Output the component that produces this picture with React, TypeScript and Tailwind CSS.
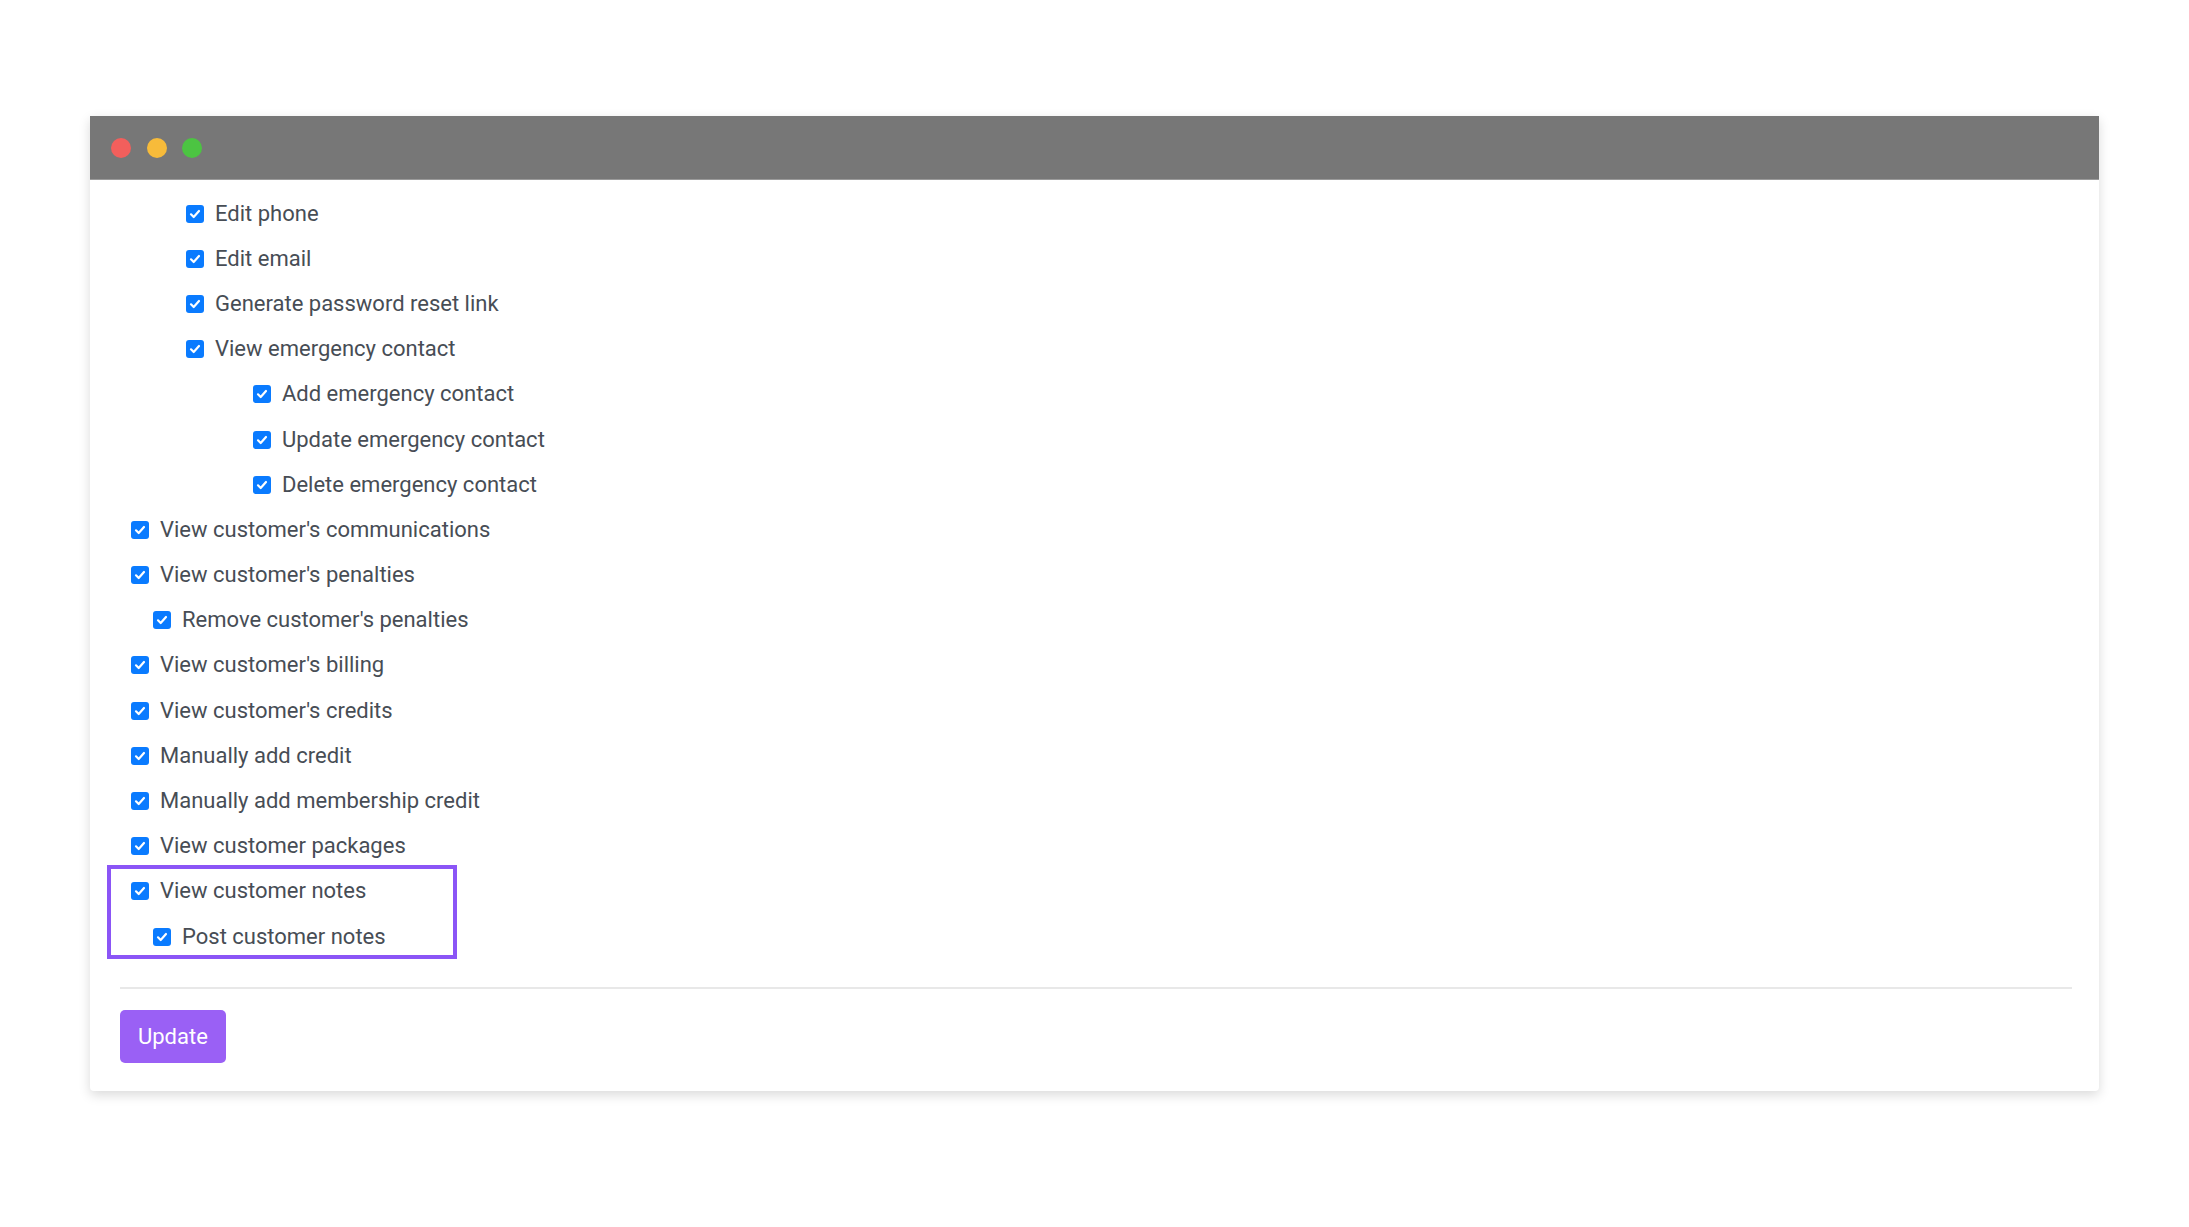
type Perm = { label: string; indent: string };

const before: Perm[] = [
  { label: "Edit phone", indent: "ml-[66px]" },
  { label: "Edit email", indent: "ml-[66px]" },
  { label: "Generate password reset link", indent: "ml-[66px]" },
  { label: "View emergency contact", indent: "ml-[66px]" },
  { label: "Add emergency contact", indent: "ml-[133px]" },
  { label: "Update emergency contact", indent: "ml-[133px]" },
  { label: "Delete emergency contact", indent: "ml-[133px]" },
  { label: "View customer's communications", indent: "ml-[11px]" },
  { label: "View customer's penalties", indent: "ml-[11px]" },
  { label: "Remove customer's penalties", indent: "ml-[33px]" },
  { label: "View customer's billing", indent: "ml-[11px]" },
  { label: "View customer's credits", indent: "ml-[11px]" },
  { label: "Manually add credit", indent: "ml-[11px]" },
  { label: "Manually add membership credit", indent: "ml-[11px]" },
  { label: "View customer packages", indent: "ml-[11px]" },
];

const notes: Perm[] = [
  { label: "View customer notes", indent: "ml-[11px]" },
  { label: "Post customer notes", indent: "ml-[33px]" },
];

function Checkbox() {
  return (
    <span className="flex h-[18px] w-[18px] shrink-0 items-center justify-center rounded-[3px] bg-[#0a7bff]">
      <svg width="12" height="12" viewBox="0 0 12 12" fill="none">
        <path d="M2 6.3 L4.7 9 L10 3" stroke="white" strokeWidth="2.2" strokeLinecap="round" strokeLinejoin="round" />
      </svg>
    </span>
  );
}

function Row({ p }: { p: Perm }) {
  return (
    <div className={`flex h-[45.2px] items-center gap-[11px] ${p.indent}`}>
      <Checkbox />
      <span className="text-[22px] leading-none text-[#474d55]">{p.label}</span>
    </div>
  );
}

export default function App() {
  return (
    <div className="min-h-[1227px] bg-white pl-[90px] pt-[116px] font-['Roboto',sans-serif]">
      <div className="w-[2009px] rounded-b-[4px] bg-white shadow-[0_4px_12px_rgba(0,0,0,0.15)]">
        {/* title bar */}
        <div className="flex h-[64px] items-center gap-[15.5px] border-b border-[#9a9a9a] bg-[#777777] pl-[21px]">
          <span className="h-[20px] w-[20px] rounded-full bg-[#f25f5c]" />
          <span className="h-[20px] w-[20px] rounded-full bg-[#f7bb3a]" />
          <span className="h-[20px] w-[20px] rounded-full bg-[#4cc442]" />
        </div>

        <div className="px-[30px] pb-[28px] pt-[11px]">
          {before.map((p) => (
            <Row key={p.label} p={p} />
          ))}

          <div className="relative">
            <div className="pointer-events-none absolute left-[-13px] top-[-4px] h-[94px] w-[350px] border-[4.5px] border-[#8b55f6]" />
            {notes.map((p) => (
              <Row key={p.label} p={p} />
            ))}
          </div>

          <div className="mt-[28px] h-[2px] w-[1952px] bg-[#e8e8e8]" />

          <button className="mt-[21px] h-[53px] rounded-[5px] bg-[#9a60f5] px-[18px] text-[22px] text-white">
            Update
          </button>
        </div>
      </div>
    </div>
  );
}
